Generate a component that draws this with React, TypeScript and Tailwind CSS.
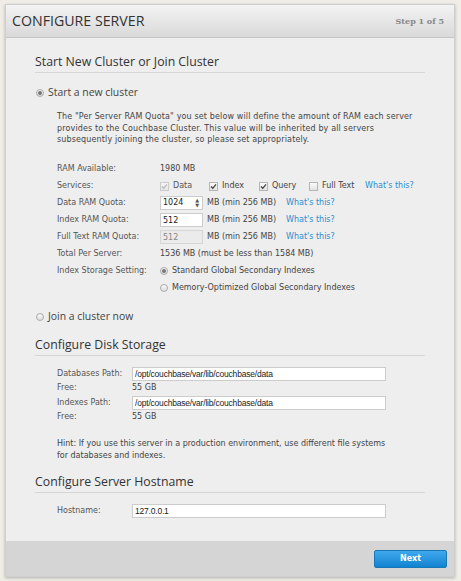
import { useState } from "react";

const Label = ({ children, w = "w-[103px]" }: { children: React.ReactNode; w?: string }) => <span className={`${w} shrink-0 text-[#555]`}>{children}</span>;

const WhatsThis = () => <a className="text-[#2a8fd1] text-[8px]">What's this?</a>;

const Radio = ({ checked }: { checked?: boolean }) => (
	<span className="w-[8px] h-[8px] rounded-full border border-[#aaa] bg-gradient-to-b from-[#fafafa] to-[#ddd] flex items-center justify-center shrink-0">
		{checked && <span className="w-[4px] h-[4px] rounded-full bg-[#777]" />}
	</span>
);

const Check = ({ checked, disabled }: { checked?: boolean; disabled?: boolean }) => (
	<span className={`w-[9px] h-[9px] border border-[#b5b5b5] bg-gradient-to-b from-[#fafafa] to-[#e4e4e4] flex items-center justify-center shrink-0 ${disabled ? "opacity-60" : ""}`}>
		{checked && (
			<svg width="7" height="7" viewBox="0 0 7 7">
				<path d="M1 3.5 L2.8 5.3 L6 1.3" stroke={disabled ? "#999" : "#444"} strokeWidth="1.3" fill="none" />
			</svg>
		)}
	</span>
);

const Heading = ({ children }: { children: React.ReactNode }) => (
	<h2 className="font-['Open_Sans',sans-serif] text-[12.3px] text-[#333] pb-[3px] border-b border-[#d6d6d6] leading-[15px]">{children}</h2>
);

// rows of the form, the height is passed so that no two h- classes clash
const Row = ({ children, h = "h-[17px]" }: { children: React.ReactNode; h?: string }) => <div className={`flex items-center ${h}`}>{children}</div>;

const App = () => {
	const [ramData, setRamData] = useState("1024");
	const [ramIndex, setRamIndex] = useState("512");

	const pathInput = "w-[254px] h-[14px] px-[2px] bg-white border border-[#ccc] outline-none font-['Liberation_Sans',Arial,sans-serif] text-[8.5px] text-[#222] tracking-[-0.2px]";

	return (
		<div className="w-[461px] h-[581px] bg-[#efede6] pt-[4px] pr-[6px] pb-[4px] pl-[5px] font-['DejaVu_Sans',Verdana,sans-serif] text-[8px] text-[#444]">
			<div className="h-full flex flex-col border border-[#cfcfcf] bg-[#eeeeee] shadow-[0_1px_3px_rgba(0,0,0,0.25)]">
				<header className="h-[33px] shrink-0 flex items-center justify-between px-[6px] bg-gradient-to-b from-[#f3f3f3] to-[#d9d9d9] border-b border-[#c4c4c4]">
					<h1 className="font-['Open_Sans',sans-serif] text-[14.2px] text-[#333]">CONFIGURE SERVER</h1>
					<span className="font-['DejaVu_Serif',serif] font-bold text-[8px] text-[#888] pr-[4px]">Step 1 of 5</span>
				</header>

				<main className="flex-1 min-h-0 px-[29px] pt-[16px]">
					<Heading>Start New Cluster or Join Cluster</Heading>

					<div className="flex items-center gap-[4px] mt-[12px] pl-[1px] font-['Open_Sans',sans-serif] text-[10.4px] text-[#444] h-[16px]">
						<Radio checked />
						<span>Start a new cluster</span>
					</div>

					<div className="pl-[22px] mt-[10px]">
						<p className="leading-[11.5px] text-[#444] w-[356px] tracking-[0.14px]">
							The "Per Server RAM Quota" you set below will define the amount of RAM each server provides to the Couchbase Cluster. This value will be inherited by all servers subsequently joining the cluster, so please set appropriately.
						</p>

						<div className="mt-[15px]">
							<Row>
								<Label>RAM Available:</Label>
								<span>1980 MB</span>
							</Row>
							<Row>
								<Label>Services:</Label>
								<span className="flex items-center gap-[4px] w-[49px] text-[#555]">
									<Check checked disabled /> Data
								</span>
								<span className="flex items-center gap-[4px] w-[50px]">
									<Check checked /> Index
								</span>
								<span className="flex items-center gap-[4px] w-[50px]">
									<Check checked /> Query
								</span>
								<span className="flex items-center gap-[4px] w-[56px]">
									<Check /> Full Text
								</span>
								<WhatsThis />
							</Row>
							<Row>
								<Label>Data RAM Quota:</Label>
								<span className="flex items-center w-[43px] h-[14px] bg-white border border-[#ccc] mr-[4px]">
									<input className="w-[30px] pl-[2px] outline-none bg-transparent text-[8px] text-[#222]" value={ramData} onChange={(e) => setRamData(e.target.value)} />
									<span className="text-[5px] text-[#555] leading-[5px] flex flex-col ml-auto mr-[3px]">
										<span>▲</span>
										<span>▼</span>
									</span>
								</span>
								<span className="w-[79px]">MB (min 256 MB)</span>
								<WhatsThis />
							</Row>
							<Row>
								<Label>Index RAM Quota:</Label>
								<input className="w-[43px] h-[14px] pl-[2px] bg-white border border-[#ccc] mr-[4px] outline-none text-[8px] text-[#222]" value={ramIndex} onChange={(e) => setRamIndex(e.target.value)} />
								<span className="w-[79px]">MB (min 256 MB)</span>
								<WhatsThis />
							</Row>
							<Row>
								<Label>Full Text RAM Quota:</Label>
								<input disabled className="w-[43px] h-[14px] pl-[2px] bg-[#ebebeb] border border-[#d6d6d6] mr-[4px] text-[8px] text-[#888]" value="512" />
								<span className="w-[79px]">MB (min 256 MB)</span>
								<WhatsThis />
							</Row>
							<Row>
								<Label>Total Per Server:</Label>
								<span>1536 MB (must be less than 1584 MB)</span>
							</Row>
							<Row>
								<Label>Index Storage Setting:</Label>
								<span className="flex items-center gap-[4px]">
									<Radio checked /> Standard Global Secondary Indexes
								</span>
							</Row>
							<Row>
								<Label> </Label>
								<span className="flex items-center gap-[4px]">
									<Radio /> Memory-Optimized Global Secondary Indexes
								</span>
							</Row>
						</div>
					</div>

					<div className="flex items-center gap-[4px] mt-[12px] pl-[1px] font-['Open_Sans',sans-serif] text-[10.4px] text-[#444] h-[16px]">
						<Radio />
						<span>Join a cluster now</span>
					</div>

					<div className="mt-[12px]">
						<Heading>Configure Disk Storage</Heading>
					</div>

					<div className="pl-[22px] mt-[11px]">
						<Row h="h-[14.5px]">
							<Label w="w-[75px]">Databases Path:</Label>
							<input className={pathInput} defaultValue="/opt/couchbase/var/lib/couchbase/data" />
						</Row>
						<Row h="h-[14.5px]">
							<Label w="w-[75px]">Free:</Label>
							<span>55 GB</span>
						</Row>
						<Row h="h-[14.5px]">
							<Label w="w-[75px]">Indexes Path:</Label>
							<input className={pathInput} defaultValue="/opt/couchbase/var/lib/couchbase/data" />
						</Row>
						<Row h="h-[14.5px]">
							<Label w="w-[75px]">Free:</Label>
							<span>55 GB</span>
						</Row>
						<p className="mt-[13px] leading-[12px] w-[340px]">
							Hint: If you use this server in a production environment, use different file systems for databases and indexes.
						</p>
					</div>

					<div className="mt-[12px]">
						<Heading>Configure Server Hostname</Heading>
					</div>

					<div className="pl-[22px] mt-[11px]">
						<Row h="h-[15px]">
							<Label w="w-[75px]">Hostname:</Label>
							<input className={pathInput} defaultValue="127.0.0.1" />
						</Row>
					</div>
				</main>

				<footer className="h-[35px] shrink-0 bg-[#d5d5d5] flex items-center justify-end pr-[7px]">
					<button className="w-[73px] h-[18px] rounded-[2px] border border-[#1a78b8] bg-gradient-to-b from-[#3fa9ee] to-[#0f83d0] text-white font-bold font-['DejaVu_Sans',sans-serif] text-[8px]">
						Next
					</button>
				</footer>
			</div>
		</div>
	);
};

export default App;
